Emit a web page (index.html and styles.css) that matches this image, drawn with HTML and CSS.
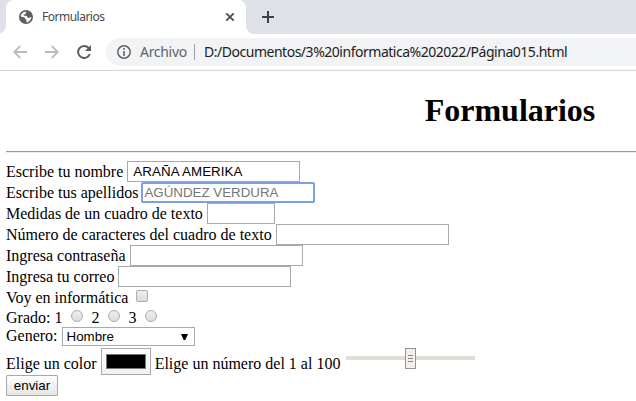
FILE: index.html
```html
<!DOCTYPE html>
<html lang="es">
<head>
<meta charset="utf-8">
<title>Formularios</title>
<link rel="stylesheet" href="styles.css">
</head>
<body>
<header class="browser">
  <div class="tabs">
    <div class="tab">
      <svg class="globe" width="14" height="14" viewBox="0 0 14 14"><circle cx="7" cy="7" r="7" fill="#5a5f64"/><path d="M7.2 1.7C6.4 2.4 7.4 3.2 6.4 4c-.8.7-1.7.3-1.7 1.3 0 .8 1.8.4 2.9.7 1.2.4.4 1.7 1.5 1.9 1.1.2 1.6-.7 3.2-.9-.1 2.8-2.2 5.1-5 5.3-.3-.9.9-1.5.2-2.3-.6-.7-1.3-.5-1.4-1.5C6 7.3 3.5 7 1.7 6.4 2 3.7 4.4 1.6 7.2 1.7Z" fill="#fff"/></svg>
      <span class="tab-title">Formularios</span>
      <svg class="close" width="10" height="10" viewBox="0 0 10 10"><path d="M1.3 1.3 8.7 8.7M8.7 1.3 1.3 8.7" stroke="#45494d" stroke-width="1.7"/></svg>
    </div>
    <svg class="plus" width="12" height="12" viewBox="0 0 12 12"><path d="M6 0v12M0 6h12" stroke="#3c4043" stroke-width="2"/></svg>
  </div>
  <div class="toolbar">
    <svg width="14" height="14" viewBox="0 0 14 14" fill="none" stroke="#babcbe" stroke-width="1.8"><path d="M14 7H1.5M7.3.8 1.2 7l6.1 6.2"/></svg>
    <svg width="14" height="14" viewBox="0 0 14 14" fill="none" stroke="#babcbe" stroke-width="1.8"><path d="M0 7h12.5M6.7.8 12.8 7l-6.1 6.2"/></svg>
    <svg width="14" height="14" viewBox="0 0 14 14"><path d="M11.7 3.1A6 6 0 1 0 12.8 9" fill="none" stroke="#5a5f64" stroke-width="2"/><path d="M14 0v6H8z" fill="#5a5f64"/></svg>
    <div class="address">
      <svg width="14" height="14" viewBox="0 0 14 14"><circle cx="7" cy="7" r="6.2" fill="none" stroke="#5f6368" stroke-width="1.5"/><path d="M7 3v1.7M7 6v5" stroke="#5f6368" stroke-width="1.6"/></svg>
      <span class="scheme">Archivo</span>
      <span class="url">D:/Documentos/3%20informatica%202022/Página015.html</span>
    </div>
  </div>
</header>
<main>
  <h1>Formularios</h1>
  <hr>
  <form>
    <div class="row"><label>Escribe tu nombre</label><input class="text" value=" ARAÑA AMERIKA"></div>
    <div class="row"><label>Escribe tus apellidos</label><input class="text focused" placeholder="AGÚNDEZ VERDURA"></div>
    <div class="row"><label>Medidas de un cuadro de texto</label><input class="text short"></div>
    <div class="row"><label>Número de caracteres del cuadro de texto</label><input class="text"></div>
    <div class="row"><label>Ingresa contraseña</label><input class="text" type="password"></div>
    <div class="row"><label>Ingresa tu correo</label><input class="text" type="email"></div>
    <div class="row"><label>Voy en informática</label><input class="check" type="checkbox"></div>
    <div class="row radio-row"><label>Grado: 1</label><input class="radio" type="radio" name="g"><label>2</label><input class="radio" type="radio" name="g"><label>3</label><input class="radio" type="radio" name="g"></div>
    <div class="row select-row"><label>Genero:</label><div class="select"><span>Hombre</span><svg width="7" height="6" viewBox="0 0 7 6"><path d="M0 0h7L4.3 6H2.7z"/></svg></div></div>
    <div class="row color-row"><label>Elige un color</label><div class="color"><div class="swatch"></div></div><label>Elige un número del 1 al 100</label><div class="range"><div class="thumb"><i></i><i></i><i></i></div></div></div>
    <button type="button">enviar</button>
  </form>
</main>
</body>
</html>
```
FILE: styles.css
```css
* { box-sizing: border-box; }
body { margin: 0; width: 636px; height: 401px; overflow: hidden; background: #fff; color: #000; font: 16px/18px "Liberation Serif", serif; }
svg { display: block; flex: none; }
.browser { font-family: "Noto Sans", sans-serif; }
.tabs { display: flex; height: 34px; background: #dee1e6; padding-left: 6px; }
.tab { position: relative; display: flex; align-items: center; width: 240px; height: 34px; padding: 0 11px 0 13px; background: #fff; border-radius: 8px 8px 0 0; }
.tab::before, .tab::after { content: ""; position: absolute; bottom: 0; width: 8px; height: 8px; }
.tab::before { left: -6px; width: 6px; background: radial-gradient(circle at -2px 0, transparent 7.5px, #fff 8px); }
.tab::after { right: -8px; background: radial-gradient(circle at 100% 0, transparent 7.5px, #fff 8px); }
.tab-title { margin-left: 9px; font-size: 12px; letter-spacing: -0.5px; color: #45494d; }
.close { margin-left: auto; }
.plus { margin: 11px 0 0 16px; }
.toolbar { display: flex; align-items: center; height: 37px; padding-left: 13px; gap: 18px; border-bottom: 1px solid #d5d6d8; }
.address { display: flex; align-items: center; flex: 1; height: 28px; margin-left: -3px; padding-left: 11px; background: #f1f3f4; border-radius: 14px 0 0 14px; white-space: nowrap; font-size: 14px; }
.scheme { width: 55px; margin-left: 9px; border-right: 1px solid #9aa0a6; line-height: 16px; color: #5f6368; letter-spacing: -0.3px; }
.url { margin-left: 9px; color: #202124; letter-spacing: -0.48px; }
main { padding-left: 6px; }
h1 { width: 252px; margin: 20px 0 0 378px; font-size: 32px; line-height: 38px; text-align: center; }
hr { margin: 22px 0 0; border: 0; height: 2px; border-top: 1px solid #9a9a9a; border-bottom: 1px solid #eee; }
form { padding-top: 8px; }
.row { display: flex; align-items: center; height: 21px; gap: 4px; white-space: nowrap; }
input { margin: 0; flex: none; }
.text { width: 173px; height: 21px; padding: 1px 2px; border: 1px solid #a9a9a9; border-radius: 0; outline: 0; background: #fff; font: 13.33px "Liberation Sans", sans-serif; letter-spacing: 0.08px; }
.focused { width: 174px; margin-left: -1px; border: 2px solid #7ba0df; border-radius: 2px; padding: 0 1px; letter-spacing: 0; }
.focused::placeholder { color: #757575; }
.short { width: 68px; }
.check, .radio { appearance: none; width: 12px; height: 12px; border: 1px solid #adadad; background: linear-gradient(#eee, #dcdcdc); }
.check { margin: 0 0 3px 4px; border-radius: 2px; }
.radio-row { height: 19px; }
.radio { margin: 0 4px 3px 5px; border-radius: 50%; }
.select-row { height: 21px; align-items: flex-start; }
.select { display: flex; align-items: center; justify-content: space-between; width: 133px; height: 19px; padding: 0 6px 0 4px; border: 1px solid #a9a9a9; font: 13.33px "Liberation Sans", sans-serif; }
.color-row { height: 27px; align-items: flex-start; }
.color-row label { padding-top: 7px; }
.color { width: 50px; height: 27px; padding: 5px 4px; border: 1px solid #a9a9a9; background: linear-gradient(#fff, #f1f1f1); }
.swatch { height: 15px; border: 1px solid #777; background: #000; }
.range { display: flex; justify-content: center; width: 129px; height: 21px; margin-left: 2px; background: linear-gradient(#e2ded6, #e2ded6) 0 8px / 129px 4px no-repeat; }
.thumb { display: flex; flex-direction: column; align-items: center; justify-content: center; gap: 2px; width: 11px; height: 21px; border: 1px solid #9a938b; background: #f2f0ed; }
.thumb i { width: 5px; height: 1px; background: #8e8881; }
button { display: block; width: 52px; height: 21px; padding: 0; border: 1px solid #a9a9a9; border-radius: 1px; background: linear-gradient(#fff, #e5e5e5); color: #000; font: 13.33px "Liberation Sans", sans-serif; }
```
